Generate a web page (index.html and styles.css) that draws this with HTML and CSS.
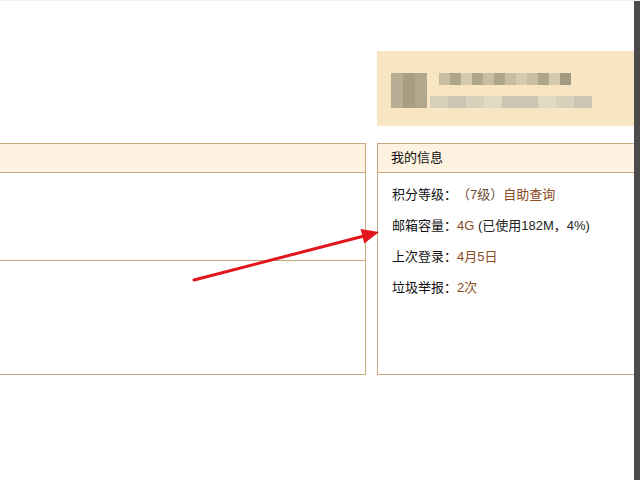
FILE: index.html
```html
<!DOCTYPE html>
<html lang="zh-CN">
<head>
    <meta charset="UTF-8">
    <meta name="viewport" content="width=device-width, initial-scale=1.0">
    <link rel="stylesheet" href="styles.css">
</head>
<body>
    <div class="screen">
        <div class="page">
            <div class="grid">
                <div class="spacer"></div>
                <div class="banner">
                    <div class="avatar"></div>
                    <div class="blur-lines">
                        <div class="blur-line top">
                            <span class="b1"></span><span class="b2"></span><span class="b3"></span><span class="b2"></span><span class="b1"></span><span class="b2"></span><span class="b1"></span><span class="b3"></span><span class="b1"></span><span class="b2"></span><span class="b3"></span><span class="b4"></span>
                        </div>
                        <div class="blur-line bottom">
                            <span class="c1"></span><span class="c2"></span><span class="c1"></span><span class="c3"></span><span class="c2"></span><span class="c2"></span><span class="c3"></span><span class="c1"></span><span class="c2"></span>
                        </div>
                    </div>
                </div>

                <div class="panel">
                    <div class="panel-head"></div>
                    <div class="panel-part upper"></div>
                    <div class="panel-part lower"></div>
                </div>

                <div class="panel">
                    <div class="panel-head">我的信息</div>
                    <div class="info">
                        <div class="row"><span class="label">积分等级：</span><span class="level">（7级）</span><span class="value">自助查询</span></div>
                        <div class="row"><span class="label">邮箱容量：</span><span class="value">4G</span><span class="note"> (已使用182M，4%)</span></div>
                        <div class="row"><span class="label">上次登录：</span><span class="value">4月5日</span></div>
                        <div class="row"><span class="label">垃圾举报：</span><span class="value">2次</span></div>
                    </div>
                </div>
            </div>

            <svg class="arrow" width="640" height="480" viewBox="0 0 640 480">
                <line x1="194" y1="280" x2="366" y2="235.5" stroke="#e2141c" stroke-width="3" stroke-linecap="round"/>
                <polygon points="379,232 364.3,243.5 360.5,229" fill="#e2141c"/>
            </svg>
        </div>
        <div class="edge"></div>
    </div>
</body>
</html>
```

FILE: styles.css
```css
body {
    margin: 0;
    background-color: #ffffff;
    font-family: "Liberation Sans", "Noto Sans CJK SC", sans-serif;
    color: #222222;
}
.screen {
    display: flex;
    height: 480px;
    overflow: hidden;
    border-top: 1px solid #fbeaf4;
    box-sizing: border-box;
}
.page {
    position: relative;
    flex: 1;
    overflow: hidden;
}
.edge {
    width: 6px;
    background-color: #4b4b4b;
}
.grid {
    display: grid;
    grid-template-columns: 368px 270px;
    grid-template-rows: 75px 232px;
    column-gap: 11px;
    row-gap: 17px;
    margin-left: -2px;
    padding-top: 50px;
}
.banner {
    background-color: #f8e6c3;
    display: flex;
    align-items: flex-start;
    padding: 22px 0 0 14px;
    gap: 12px;
}
.avatar {
    width: 36px;
    height: 35px;
    background: linear-gradient(90deg, #b9ae95 0 12px, #a99e84 12px 24px, #b2a78d 24px);
}
.blur-lines {
    display: flex;
    flex-direction: column;
    gap: 11px;
}
.blur-line {
    display: flex;
    height: 12px;
}
.blur-line span {
    width: 11px;
    height: 12px;
}
.blur-line.bottom {
    margin-left: -9px;
}
.blur-line.bottom span {
    width: 18px;
}
.b1 { background-color: #c8bda3; }
.b2 { background-color: #b0a68c; }
.b3 { background-color: #d6cbb0; }
.b4 { background-color: #a39a82; }
.c1 { background-color: #d8d0bb; }
.c2 { background-color: #cdc5b1; }
.c3 { background-color: #e2d9c3; }
.panel {
    border: 1px solid #c9a87e;
    display: flex;
    flex-direction: column;
}
.panel-head {
    height: 28px;
    line-height: 28px;
    background-color: #fdf3e0;
    border-bottom: 1px solid #c9a87e;
    padding-left: 13px;
    font-size: 13px;
    color: #111111;
}
.panel-part.upper {
    height: 87px;
    border-bottom: 1px solid #c9a87e;
}
.panel-part.lower {
    flex: 1;
}
.info {
    padding: 6px 0 0 14px;
    font-size: 13px;
}
.row {
    height: 31px;
    line-height: 31px;
    white-space: nowrap;
}
.label {
    display: inline-block;
    width: 65px;
    color: #111111;
}
.level {
    color: #6a4a32;
}
.value {
    color: #8a4a22;
}
.note {
    color: #222222;
}
.arrow {
    position: absolute;
    left: 0;
    top: -1px;
}
```
